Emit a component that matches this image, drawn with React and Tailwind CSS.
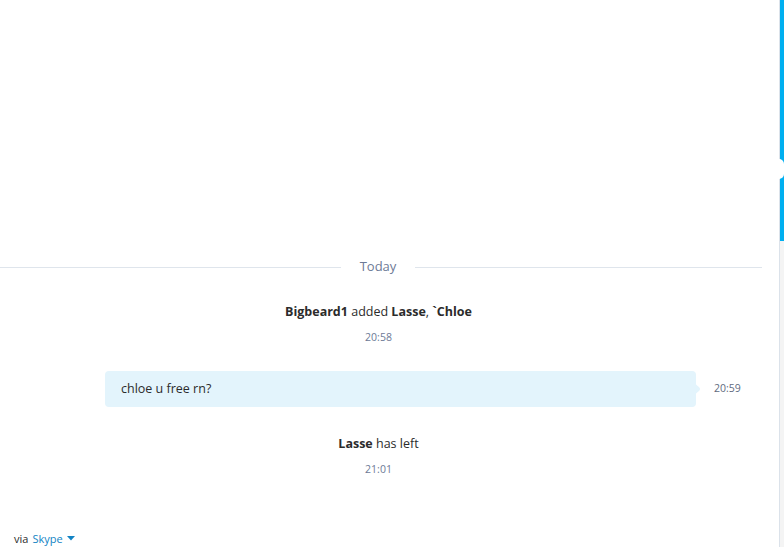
const font = { fontFamily: '"Open Sans", "Noto Sans", sans-serif' };

const Divider = ({ label }) => (
  <div className="flex items-center h-[22px]">
    <div className="w-[341px] h-px bg-[#dfe5ec]" />
    <div className="w-[74px] text-center text-[13px] text-[#6d7a96]">{label}</div>
    <div className="w-[347px] h-px bg-[#dfe5ec]" />
  </div>
);

const Event = ({ children, time }) => (
  <div className="w-[757px] flex flex-col items-center">
    <p className="text-[12.5px] leading-[18px] text-[#2b2b2b]">{children}</p>
    <p className="mt-[9px] text-[10.5px] leading-[14px] text-[#6d7a96]">{time}</p>
  </div>
);

const Bubble = ({ text, time }) => (
  <div className="flex items-center pl-[105px]">
    <div className="relative w-[591px] h-[36px] bg-[#e3f4fc] rounded-[4px] flex items-center pl-4">
      <span className="text-[12.5px] text-[#2b2b2b]">{text}</span>
      <svg className="absolute right-[-5px] top-[10px]" width="6" height="16" viewBox="0 0 6 16">
        <path d="M0 0 C0 5 5 5 5 8 C5 11 0 11 0 16 Z" fill="#e3f4fc" />
      </svg>
    </div>
    <span className="ml-[18px] text-[10.5px] text-[#5f6b80]">{time}</span>
  </div>
);

export default function App() {
  return (
    <div className="flex w-[784px] h-[547px] bg-white overflow-hidden" style={font}>
      <div className="flex-1 flex flex-col">
        <div className="h-[256px]" />
        <Divider label="Today" />
        <div className="h-[25px]" />
        <Event time="20:58">
          <b>Bigbeard1</b> added <b>Lasse</b>, <b>`Chloe</b>
        </Event>
        <div className="h-[27px]" />
        <Bubble text="chloe u free rn?" time="20:59" />
        <div className="h-[28px]" />
        <Event time="21:01">
          <b>Lasse</b> has left
        </Event>
        <div className="flex-1" />
        <div className="pl-[14px] pb-0 text-[11px] text-[#2b2b2b] flex items-center">
          via <span className="ml-1 text-[#1283c4]">Skype</span>
          <svg className="ml-[4px]" width="8" height="5" viewBox="0 0 8 5">
            <path d="M0 0 L8 0 L4 4.5 Z" fill="#1283c4" />
          </svg>
        </div>
      </div>
      <div className="w-[5px] border-l border-[#dbe2ea] flex flex-col">
        <div className="relative h-[241px] bg-[#00aff0]">
          <div className="absolute left-0 top-[159px] w-[10px] h-[20px] -ml-[6px] rounded-full bg-white" />
        </div>
        <div className="flex-1 bg-[#f4f4f4]" />
      </div>
    </div>
  );
}
